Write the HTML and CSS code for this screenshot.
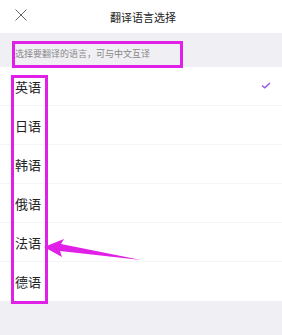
FILE: index.html
```html
<!DOCTYPE html>
<html lang="zh">
<head>
  <meta charset="UTF-8" />
  <title>翻译语言选择</title>
  <link rel="stylesheet" href="styles.css">
</head>
<body>

<div class="page">
  <header class="topbar">
    <svg class="close" width="12" height="12" viewBox="0 0 12 12">
      <path d="M0.5 0.5 L11.5 11.5 M11.5 0.5 L0.5 11.5" stroke="#666" stroke-width="1" fill="none" />
    </svg>
    <h1>翻译语言选择</h1>
  </header>

  <div class="hint">选择要翻译的语言，可与中文互译</div>

  <ul class="lang-list">
    <li class="active">英语
      <svg class="check" width="10" height="7" viewBox="0 0 10 7">
        <path d="M1 3.5 L3.8 5.8 L9 1" stroke="#9a5ce0" stroke-width="1.6" fill="none" />
      </svg>
    </li>
    <li>日语</li>
    <li>韩语</li>
    <li>俄语</li>
    <li>法语</li>
    <li>德语</li>
  </ul>

  <div class="footer-space"></div>

  <!-- annotations -->
  <div class="mark mark-hint"></div>
  <div class="mark mark-list"></div>
  <svg class="arrow" width="110" height="30" viewBox="0 0 110 30">
    <polygon points="0,12 20,4 17,9 97,25 16,16 18,22" fill="#e020e6" />
  </svg>
</div>

</body>
</html>
```

FILE: styles.css
```css
body {
  margin: 0;
  font-family: "Noto Sans CJK SC", "Noto Sans", sans-serif;
  background: #f0eff4;
}
.page {
  position: relative;
  width: 282px;
  height: 335px;
  overflow: hidden;
}
.topbar {
  height: 33px;
  background: white;
  display: flex;
  align-items: center;
  justify-content: center;
  position: relative;
}
.topbar .close {
  position: absolute;
  left: 15px;
  top: 9px;
}
.topbar h1 {
  margin: 0;
  font-size: 11px;
  font-weight: normal;
  color: #222;
  padding-left: 4px;
}
.hint {
  height: 34px;
  box-sizing: border-box;
  padding: 14px 0 0 15px;
  font-size: 9px;
  color: #888;
  line-height: 14px;
}
.lang-list {
  list-style: none;
  margin: 0;
  padding: 0;
  background: white;
}
.lang-list li {
  height: 38px;
  border-bottom: 1px solid #f4f3f7;
  display: flex;
  align-items: center;
  justify-content: space-between;
  padding: 0 11px 0 15px;
  font-size: 13px;
  color: #222;
}
.lang-list li:last-child {
  border-bottom: none;
  height: 39px;
}
.check {
  margin-top: -2px;
}
.footer-space {
  height: 35px;
}

/* annotation marks */
.mark {
  position: absolute;
  border: 3px solid #e020e6;
  box-sizing: border-box;
}
.mark-hint {
  left: 12px;
  top: 41px;
  width: 171px;
  height: 27px;
}
.mark-list {
  left: 11px;
  top: 75px;
  width: 37px;
  height: 229px;
}
.arrow {
  position: absolute;
  left: 44px;
  top: 235px;
}
```
